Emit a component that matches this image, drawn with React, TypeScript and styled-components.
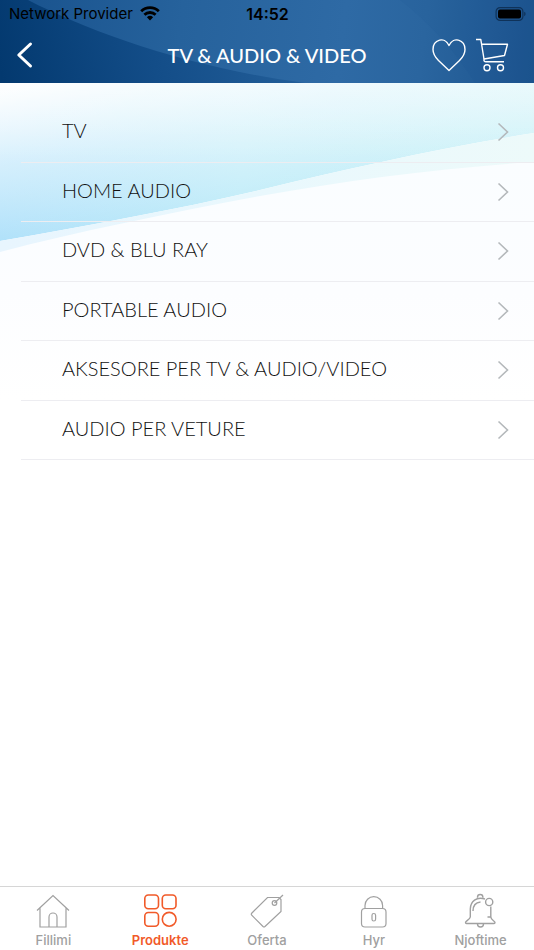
import React from "react";
import styled, { createGlobalStyle } from "styled-components";

const GlobalStyle = createGlobalStyle`
  * { box-sizing: border-box; }
  html, body, #root { height: 100%; margin: 0; }
  body { background: #fff; font-family: Inter, "Liberation Sans", sans-serif; }
`;

const Screen = styled.div`
  min-height: 100vh;
  display: flex;
  flex-direction: column;
`;

const Header = styled.header`
  position: relative;
  isolation: isolate;
  color: #fff;
`;

const Backdrop = styled.svg`
  position: absolute;
  inset: 0;
  z-index: -1;
  width: 100%;
  height: 100%;
`;

const StatusBar = styled.div`
  display: grid;
  grid-template-columns: 1fr auto 1fr;
  align-items: center;
  height: 27px;
  padding: 0 8px 0 9px;
  color: #000;
  font-size: 16px;
  line-height: 20px;
`;

const Carrier = styled.div`
  display: flex;
  align-items: center;
  gap: 7px;
  font-size: 15px;
`;

const Clock = styled.time`
  font-weight: 600;
`;

const Battery = styled.svg`
  justify-self: end;
`;

const NavBar = styled.div`
  display: grid;
  grid-template-columns: 1fr auto 1fr;
  align-items: center;
  height: 56px;
  padding: 0 14px;
`;

const Title = styled.h1`
  margin: 0;
  font-family: Lato, sans-serif;
  font-size: 20px;
  line-height: 28px;
  font-weight: 500;
`;

const IconButton = styled.button`
  display: flex;
  padding: 0;
  border: 0;
  background: none;
  color: inherit;
  cursor: pointer;
`;

const Actions = styled.div`
  display: flex;
  justify-content: flex-end;
  gap: 9px;
  padding-right: 11px;
`;

const Content = styled.main`
  position: relative;
  isolation: isolate;
  flex: 1;
`;

const Waves = styled(Backdrop)`
  height: 400px;
`;

const CategoryList = styled.ul`
  display: grid;
  grid-auto-rows: 1fr;
  min-height: 357px;
  margin: 20px 0 0;
  padding: 0 0 0 21px;
  list-style: none;
`;

const CategoryItem = styled.li`
  display: flex;
  border-bottom: 1px solid #ededf1;
`;

const CategoryLink = styled.a`
  flex: 1;
  display: flex;
  align-items: center;
  justify-content: space-between;
  padding: 0 25px 0 41px;
  color: #111;
  font-family: Lato, sans-serif;
  font-size: 20px;
  line-height: 24px;
  font-weight: 300;
  text-decoration: none;
`;

const Label = styled.span`
  padding-bottom: 4px;
`;

const TabBar = styled.nav`
  display: grid;
  grid-template-columns: repeat(5, 1fr);
  height: 64px;
  border-top: 1px solid #d6d6d6;
  background: #fff;
`;

const Tab = styled.a<{ $active?: boolean }>`
  display: flex;
  flex-direction: column;
  align-items: center;
  padding-top: 6px;
  gap: 3px;
  color: ${(p) => (p.$active ? "#f15a29" : "#a0a0a0")};
  font-size: 13px;
  line-height: 16px;
  font-weight: ${(p) => (p.$active ? 600 : 500)};
  text-decoration: none;
`;

const TabIcon = styled.svg`
  width: 36px;
  height: 36px;
  fill: none;
  stroke: currentColor;
  stroke-width: 1.2;
`;

const categories = [
  "TV",
  "HOME AUDIO",
  "DVD & BLU RAY",
  "PORTABLE AUDIO",
  "AKSESORE PER TV & AUDIO/VIDEO",
  "AUDIO PER VETURE",
];

const tabs = [
  {
    label: "Fillimi",
    icon: (
      <>
        <path d="M2 17.500L18 2.500L34 17.500M5 15V34H31V15" />
        <path d="M14 34V24a4 4 0 0 1 8 0V34" />
      </>
    ),
  },
  {
    label: "Produkte",
    active: true,
    icon: (
      <g strokeWidth="1.600">
        <rect x="2.800" y="2" width="13.700" height="13.700" rx="3.500" />
        <rect x="20.300" y="2" width="13.700" height="13.700" rx="3.500" />
        <rect x="2.800" y="19.500" width="13.700" height="13.700" rx="3.500" />
        <circle cx="27.200" cy="26.300" r="6.900" />
      </g>
    ),
  },
  {
    label: "Oferta",
    icon: (
      <>
        <path d="M18.500 4.500H30L32 6.500V18.500L16 33.500Q15 34.300 14 33.500L2.500 22Q2 21 2.700 20.200Z" />
        <circle cx="25.500" cy="10" r="2.300" />
        <path d="M25.500 10L34 2" />
      </>
    ),
  },
  {
    label: "Hyr",
    icon: (
      <>
        <rect x="5.500" y="15.500" width="24.500" height="18.500" rx="3.500" />
        <path d="M9 15.500V12.500a8.800 8.800 0 0 1 17.600 0V15.500" />
        <rect x="16" y="20.500" width="3.600" height="7.500" rx="1.800" />
      </>
    ),
  },
  {
    label: "Njoftime",
    icon: (
      <g strokeWidth="1.400">
        <path d="M22 6C13.500 3.500 7.500 8 7.300 16V24C7 26.500 2.500 28 2.500 29.500Q2.500 30.500 3.500 30.500H31Q32 30.500 32 29.500C32 28 28 27 27.800 24H24.500M27.800 24V13.500" />
        <path d="M14.500 4.800V4.200a2.700 2.700 0 0 1 5.400 0V4.800M14.500 31a3 3 0 0 0 6 0" />
        <path d="M10 18C10 12 12.500 9.500 17.500 9" />
        <circle cx="26.200" cy="9" r="3.600" />
      </g>
    ),
  },
];

export default function App() {
  return (
    <Screen>
      <GlobalStyle />
      <Header>
        <Backdrop viewBox="0 0 534 83" preserveAspectRatio="none" aria-hidden="true">
          <defs>
            <linearGradient id="navy" gradientUnits="userSpaceOnUse" x1="0" y1="70" x2="330" y2="0">
              <stop offset="0" stopColor="#03396f" />
              <stop offset="0.450" stopColor="#134d88" />
              <stop offset="1" stopColor="#27639e" />
            </linearGradient>
            <linearGradient id="glow" gradientUnits="userSpaceOnUse" x1="30" y1="0" x2="534" y2="60">
              <stop offset="0" stopColor="#1a548f" />
              <stop offset="0.300" stopColor="#26629c" />
              <stop offset="0.620" stopColor="#2e6aa5" />
              <stop offset="0.780" stopColor="#2a659f" />
              <stop offset="1" stopColor="#1c548e" />
            </linearGradient>
          </defs>
          <rect width="534" height="83" fill="url(#navy)" />
          <path d="M28 0C90 32 190 68 305 83H534V0Z" fill="url(#glow)" />
          <path d="M400 0Q445 35 475 83H534V0Z" fill="#0d4884" opacity="0.060" />
        </Backdrop>
        <StatusBar>
          <Carrier>
            Network Provider
            <svg width="20" height="15" viewBox="0 0 20 15" fill="none" stroke="#000" strokeWidth="2.800" aria-hidden="true">
              <path d="M1.200 5.200a12.500 12.500 0 0 1 17.600 0" />
              <path d="M4.400 8.800a8 8 0 0 1 11.200 0" />
              <path d="M10 14.500L6.900 11.300a4.500 4.500 0 0 1 6.200 0Z" fill="#000" stroke="none" />
            </svg>
          </Carrier>
          <Clock>14:52</Clock>
          <Battery width="31" height="14" viewBox="0 0 31 14" aria-hidden="true">
            <rect x="1.100" y="0.600" width="26.800" height="12.800" rx="4" fill="none" stroke="#0f3259" strokeWidth="1.200" />
            <rect x="3" y="2.500" width="23" height="9" rx="2" fill="#000" />
            <path d="M29.200 4.800q1.400.6 1.400 2.200t-1.400 2.200Z" fill="#0f3259" />
          </Battery>
        </StatusBar>
        <NavBar>
          <IconButton type="button" aria-label="Back">
            <svg width="20" height="28" viewBox="0 0 20 28" fill="none" stroke="#fff" strokeWidth="3" strokeLinecap="round" strokeLinejoin="round">
              <path d="M16.500 3L4.800 14L16.500 25" />
            </svg>
          </IconButton>
          <Title>TV &amp; AUDIO &amp; VIDEO</Title>
          <Actions>
            <IconButton type="button" aria-label="Favourites">
              <svg width="34" height="34" viewBox="0 0 34 34" fill="none" stroke="#fff" strokeWidth="1.400" strokeLinejoin="round">
                <path d="M17 7.500C14.500 2.500 10.500 1.200 7.500 2.200C3 3.500 1 7.500 1 11.500C1 16 3.500 19.500 6.500 22.500L17 32.500L27.500 22.500C30.500 19.500 33 16 33 11.500C33 7.500 31 3.500 26.500 2.200C23.500 1.200 19.500 2.500 17 7.500Z" />
              </svg>
            </IconButton>
            <IconButton type="button" aria-label="Cart">
              <svg width="34" height="34" viewBox="0 0 34 34" fill="none" stroke="#fff" strokeWidth="1.400" strokeLinejoin="round">
                <path d="M1 1.500H5.800L9 21" />
                <path d="M6.500 6.300H32.500L29.500 17.500L9 21Q8.500 23.800 11 23.800H29" />
                <circle cx="12" cy="29.800" r="3" />
                <circle cx="25.500" cy="29.800" r="3" />
              </svg>
            </IconButton>
          </Actions>
        </NavBar>
      </Header>

      <Content>
        <Waves viewBox="0 0 534 400" preserveAspectRatio="none" aria-hidden="true">
          <defs>
            <linearGradient id="sky" x1="0" y1="0" x2="1" y2="0">
              <stop offset="0" stopColor="#ade0fa" />
              <stop offset="0.450" stopColor="#c3edf9" />
              <stop offset="1" stopColor="#cdf2f8" />
            </linearGradient>
            <linearGradient id="mist" gradientUnits="userSpaceOnUse" x1="0" y1="0" x2="30" y2="160">
              <stop offset="0" stopColor="#fff" />
              <stop offset="0.500" stopColor="#fafdff" stopOpacity="0.500" />
              <stop offset="1" stopColor="#fff" stopOpacity="0" />
            </linearGradient>
            <linearGradient id="mistRight" x1="0" y1="0" x2="0" y2="1">
              <stop offset="0" stopColor="#fff" stopOpacity="0.350" />
              <stop offset="0.800" stopColor="#fff" stopOpacity="0" />
            </linearGradient>
            <linearGradient id="band" x1="0" y1="0" x2="1" y2="0">
              <stop offset="0" stopColor="#e8f5fe" />
              <stop offset="0.500" stopColor="#e9f8fd" />
              <stop offset="1" stopColor="#edfafa" />
            </linearGradient>
            <linearGradient id="snow" x1="0" y1="0" x2="0" y2="1">
              <stop offset="0" stopColor="#fafdff" />
              <stop offset="0.550" stopColor="#fcfdff" />
              <stop offset="1" stopColor="#fff" />
            </linearGradient>
          </defs>
          <path d="M0 0H534V50C440 65 350 85 260 107C180 126 90 142 0 158Z" fill="url(#sky)" />
          <path d="M0 0H534V50C440 65 350 85 260 107C180 126 90 142 0 158Z" fill="url(#mist)" />
          <path d="M0 0H534V100H0Z" fill="url(#mistRight)" />
          <path d="M534 50C440 65 350 85 260 107C180 126 90 142 0 158V180H534Z" fill="url(#band)" />
          <path d="M534 79C440 85 350 97 260 113C170 130 80 148 0 169V317H534Z" fill="url(#snow)" />
        </Waves>
        <CategoryList>
          {categories.map((name) => (
            <CategoryItem key={name}>
              <CategoryLink href="#">
                <Label>{name}</Label>
                <svg width="12" height="20" viewBox="0 0 12 20" fill="none" stroke="#b4b8bb" strokeWidth="1.600" aria-hidden="true">
                  <path d="M1.500 1.500L10.500 10L1.500 18.500" />
                </svg>
              </CategoryLink>
            </CategoryItem>
          ))}
        </CategoryList>
      </Content>

      <TabBar>
        {tabs.map((tab) => (
          <Tab key={tab.label} href="#" $active={tab.active} aria-current={tab.active ? "page" : undefined}>
            <TabIcon viewBox="0 0 36 36" aria-hidden="true">{tab.icon}</TabIcon>
            {tab.label}
          </Tab>
        ))}
      </TabBar>
    </Screen>
  );
}
